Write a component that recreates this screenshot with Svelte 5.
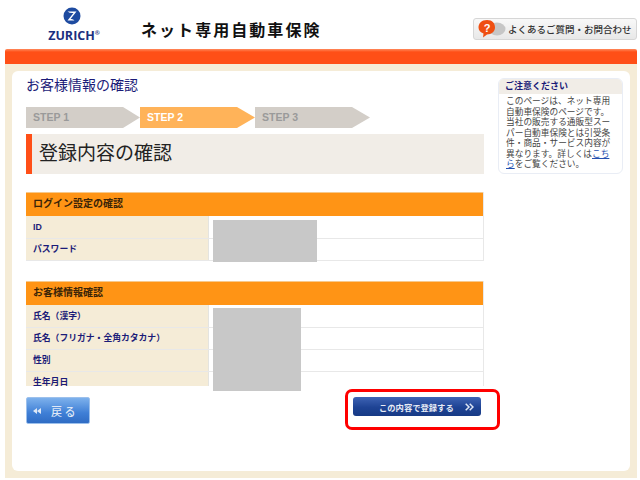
<script>
	const steps = [
		{ label: 'STEP 1', active: false },
		{ label: 'STEP 2', active: true },
		{ label: 'STEP 3', active: false }
	];

	const sections = [
		{ title: 'ログイン設定の確認', rows: ['ID', 'パスワード'] },
		{
			title: 'お客様情報確認',
			rows: ['氏名（漢字）', '氏名（フリガナ・全角カタカナ）', '性別', '生年月日']
		}
	];
</script>

<div class="page">
	<header class="top">
		<div class="logo">
			<svg width="24" height="24" viewBox="0 0 24 24" aria-hidden="true">
				<circle cx="12" cy="12" r="8.5" fill="#1e4ba0" />
				<path d="M7.5 7.5 H16.5 L10.5 15 Q13 14.5 14.5 16.5 H7.5 L13.5 9 Q10 9.5 7.5 7.5 Z" fill="#fff" />
			</svg>
			<span class="logo-name">ZURICH<sup>®</sup></span>
		</div>
		<div class="product">ネット専用自動車保険</div>
		<div class="faq">
			<svg width="29" height="20" viewBox="0 0 29 20" aria-hidden="true">
				<ellipse cx="20" cy="10" rx="8.5" ry="6.5" fill="#c6c6c6" />
				<path d="M10 1 C15.5 1 18 4.5 18 8.5 C18 12.5 14.5 15.5 10 15.5 L6 18.5 L6.5 14.5 C3.5 13.5 1.5 11.5 1.5 8.5 C1.5 4.5 4.5 1 10 1 Z" fill="#ef4f12" />
				<text x="10" y="12.5" class="faq-mark">?</text>
			</svg>
			<span>よくあるご質問・お問合わせ</span>
		</div>
	</header>

	<div class="band"></div>

	<div class="frame">
		<div class="panel">
			<main class="content">
				<h1 class="page-title">お客様情報の確認</h1>

				<div class="steps">
					{#each steps as step}
						<div class="step" class:active={step.active}>{step.label}</div>
					{/each}
				</div>

				<h2 class="heading">登録内容の確認</h2>

				<div class="sheet">
					<div class="scroller">
						{#each sections as section}
							<section class="block">
								<div class="block-head">{section.title}</div>
								{#each section.rows as row}
									<div class="row">
										<div class="row-label">{row}</div>
										<div class="row-value"></div>
									</div>
								{/each}
							</section>
						{/each}
					</div>
					<div class="mask mask-login"></div>
					<div class="mask mask-customer"></div>
				</div>

				<div class="actions">
					<button class="btn-back">
						<svg width="8" height="6" viewBox="0 0 8 6" aria-hidden="true">
							<path d="M0 3 L4 0 V6 Z M4 3 L8 0 V6 Z" fill="#dfe8f6" />
						</svg>
						<span>戻る</span>
					</button>
					<div class="submit-wrap">
						<button class="btn-submit">
							<span>この内容で登録する</span>
							<svg width="9" height="8" viewBox="0 0 9 8" aria-hidden="true">
								<path d="M0.7 0.7 L4 4 L0.7 7.3 M4.7 0.7 L8 4 L4.7 7.3" fill="none" stroke="#dfe6f4" stroke-width="1.5" />
							</svg>
						</button>
						<div class="highlight"></div>
					</div>
				</div>
			</main>

			<aside class="note">
				<div class="note-head">ご注意ください</div>
				<p class="note-body">このページは、ネット専用自動車保険のページです。当社の販売する通販型スーパー自動車保険とは引受条件・商品・サービス内容が異なります。詳しくは<a href="#top">こちら</a>をご覧ください。</p>
			</aside>
		</div>
	</div>
</div>

<style>
	:global(body) {
		margin: 0;
		background: #fff;
	}

	.page {
		width: 640px;
		height: 480px;
		overflow: hidden;
		font-family: "Liberation Sans", "Noto Sans CJK JP", sans-serif;
	}

	.top {
		display: flex;
		height: 49px;
	}

	.logo {
		width: 141px;
		height: 49px;
		display: flex;
		flex-direction: column;
		align-items: center;
		padding: 4px 0 0 3px;
		box-sizing: border-box;
	}

	.logo-name {
		font-family: "Open Sans", sans-serif;
		font-weight: 700;
		font-size: 12.5px;
		line-height: 13px;
		color: #1b2f7f;
		margin-top: 1px;
		margin-left: 4px;
	}

	.logo-name sup {
		font-size: 6px;
		line-height: 0;
		vertical-align: 5px;
	}

	.product {
		width: 332px;
		margin-top: 21px;
		font-size: 16px;
		line-height: 20px;
		font-weight: 700;
		letter-spacing: 2.05px;
		color: #111;
		white-space: nowrap;
	}

	.faq {
		width: 164px;
		height: 22px;
		margin-top: 18px;
		display: flex;
		align-items: center;
		gap: 2px;
		padding-left: 3px;
		box-sizing: border-box;
		background: linear-gradient(#f8f8f8, #e8e8e8);
		border: 1px solid #d6d6d6;
		border-radius: 3px;
		font-size: 9.5px;
		font-weight: 500;
		color: #333;
		white-space: nowrap;
	}

	.faq-mark {
		fill: #fff;
		font-size: 11px;
		font-weight: 700;
		text-anchor: middle;
		font-family: "Liberation Sans", sans-serif;
	}

	.band {
		height: 15px;
		margin: 0 3px 0 5px;
		background: linear-gradient(#ff8a5c 0, #ff4f17 3px);
		border-radius: 2px 2px 0 0;
	}

	.frame {
		margin: 0 3px 0 5px;
		padding: 7px;
		height: 400px;
		background: #f5ecd7;
	}

	.panel {
		height: 400px;
		display: flex;
		background: #fff;
		border-radius: 6px;
		padding: 0 7px 0 14px;
		box-sizing: border-box;
	}

	.content {
		width: 458px;
		flex-shrink: 0;
	}

	.page-title {
		margin: 7px 0 0;
		height: 22px;
		font-size: 14px;
		line-height: 15px;
		font-weight: 400;
		color: #1b1b78;
	}

	.steps {
		display: flex;
		margin-top: 7px;
	}

	.step {
		width: 115px;
		height: 21px;
		padding-left: 7px;
		box-sizing: border-box;
		background: #d3cec8;
		clip-path: polygon(0 0, 97px 0, 100% 50%, 97px 100%, 0 100%);
		font-size: 10.5px;
		line-height: 21px;
		font-weight: 700;
		color: #9a9a9a;
	}

	.step:first-child {
		width: 114px;
	}

	.step.active {
		background: #ffb359;
		color: #fff;
	}

	.heading {
		margin: 6px 0 0;
		height: 40px;
		padding-left: 7px;
		background: #f1ede7;
		border-left: 6px solid #ff4f17;
		box-sizing: border-box;
		font-size: 19px;
		line-height: 40px;
		font-weight: 400;
		color: #222;
	}

	.sheet {
		position: relative;
	}

	.scroller {
		height: 212px;
		overflow: hidden;
	}

	.block {
		margin-top: 18px;
		border-right: 1px solid #e8e8e8;
	}

	.block + .block {
		margin-top: 20px;
	}

	.block-head {
		height: 24px;
		padding-left: 7px;
		box-sizing: border-box;
		background: #ff9415;
		border-top: 1px solid #f7c98c;
		font-size: 10px;
		line-height: 22px;
		font-weight: 700;
		color: #3a2408;
	}

	.row {
		display: flex;
		height: 22px;
		box-sizing: border-box;
		border-bottom: 1px solid #e8e8e8;
	}

	.block-head + .row {
		height: 23px;
	}

	.block-head + .row .row-label {
		line-height: 22px;
	}

	.row-label {
		width: 183px;
		padding-left: 7px;
		box-sizing: border-box;
		background: #f5ecd7;
		border-right: 1px solid #e4e4e0;
		font-size: 8.8px;
		line-height: 21px;
		font-weight: 700;
		color: #1b1b78;
		white-space: nowrap;
	}

	.mask {
		position: absolute;
		left: 187px;
		background: #c8c8c8;
	}

	.mask-login {
		top: 46px;
		width: 104px;
		height: 42px;
	}

	.mask-customer {
		top: 134px;
		width: 88px;
		height: 83px;
	}

	.actions {
		display: flex;
		justify-content: space-between;
		align-items: flex-start;
		margin-top: 11px;
	}

	.btn-back {
		width: 64px;
		height: 27px;
		padding: 0 0 0 6px;
		display: flex;
		align-items: center;
		gap: 10px;
		background: linear-gradient(#7db1ec, #3f7fd6 60%, #2f6cc4);
		border: 1px solid #9cc0ec;
		border-radius: 2px;
		font-family: inherit;
		font-size: 11px;
		font-weight: 500;
		letter-spacing: 2.5px;
		color: #dfe8f6;
	}

	.submit-wrap {
		position: relative;
		margin-right: 3px;
	}

	.btn-submit {
		width: 128px;
		height: 19px;
		padding: 0 7px 0 26px;
		display: flex;
		align-items: center;
		justify-content: space-between;
		background: linear-gradient(#3e63b4, #1e4394 55%, #173a85);
		border: none;
		border-radius: 3px;
		font-family: inherit;
		font-size: 8.3px;
		font-weight: 700;
		color: #e8ecf6;
		white-space: nowrap;
	}

	.highlight {
		position: absolute;
		left: -8px;
		top: -8px;
		width: 149px;
		height: 35px;
		border: 3px solid #f00;
		border-radius: 7px;
	}

	.note {
		width: 125px;
		height: 96px;
		margin: 7px 0 0 14px;
		flex-shrink: 0;
		box-sizing: border-box;
		border: 1px solid #e9edf5;
		border-radius: 6px;
		overflow: hidden;
	}

	.note-head {
		height: 15px;
		padding-left: 6px;
		background: #f1ede7;
		font-size: 9px;
		line-height: 15px;
		font-weight: 700;
		color: #1b1b78;
	}

	.note-body {
		margin: 2px 0 0;
		padding: 0 0 0 7px;
		width: 107px;
		font-size: 8.7px;
		line-height: 10.5px;
		color: #444;
		word-break: break-all;
	}

	.note-body a {
		color: #2450b0;
	}
</style>
